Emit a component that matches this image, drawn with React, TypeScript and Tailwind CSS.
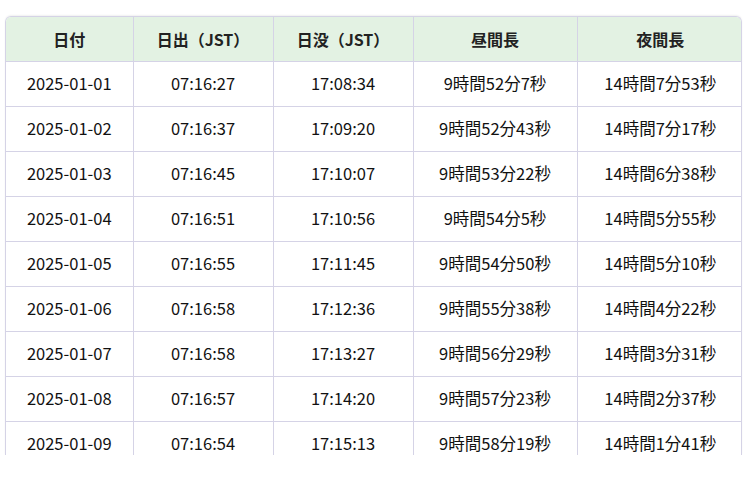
import React from "react";

const rows = [
  ["2025-01-01", "07:16:27", "17:08:34", "9時間52分7秒", "14時間7分53秒"],
  ["2025-01-02", "07:16:37", "17:09:20", "9時間52分43秒", "14時間7分17秒"],
  ["2025-01-03", "07:16:45", "17:10:07", "9時間53分22秒", "14時間6分38秒"],
  ["2025-01-04", "07:16:51", "17:10:56", "9時間54分5秒", "14時間5分55秒"],
  ["2025-01-05", "07:16:55", "17:11:45", "9時間54分50秒", "14時間5分10秒"],
  ["2025-01-06", "07:16:58", "17:12:36", "9時間55分38秒", "14時間4分22秒"],
  ["2025-01-07", "07:16:58", "17:13:27", "9時間56分29秒", "14時間3分31秒"],
  ["2025-01-08", "07:16:57", "17:14:20", "9時間57分23秒", "14時間2分37秒"],
  ["2025-01-09", "07:16:54", "17:15:13", "9時間58分19秒", "14時間1分41秒"],
];

const headers = ["日付", "日出（JST）", "日没（JST）", "昼間長", "夜間長"];
const widths = ["w-[127px]", "w-[140px]", "w-[140px]", "w-[164px]", "w-[166px]"];

export default function App() {
  return (
    <div
      className="bg-white w-[750px] h-[482px] pt-4 pl-[5px]"
      style={{ fontFamily: '"Noto Sans CJK JP", "Noto Sans", sans-serif' }}
    >
      <div className="w-[737px] h-[439px] overflow-hidden rounded-t-md border border-b-0 border-[#d5d3e6] shadow-[0_-1px_2px_rgba(0,0,0,0.06)]">
        <table className="w-full border-collapse table-fixed">
          <thead>
            <tr className="bg-[#e3f2e3] h-[44px]">
              {headers.map((h, i) => (
                <th
                  key={i}
                  className={`${widths[i]} border-b border-[#d5d3e6] ${i > 0 ? "border-l" : ""} text-[16px] font-bold text-[#222] text-center p-0`}
                >
                  {h}
                </th>
              ))}
            </tr>
          </thead>
          <tbody>
            {rows.map((r, ri) => (
              <tr key={ri} className="h-[45px]">
                {r.map((c, ci) => (
                  <td
                    key={ci}
                    className={`border-b border-[#d5d3e6] ${ci > 0 ? "border-l" : ""} text-[16.5px] text-[#111] text-center p-0`}
                  >
                    {c}
                  </td>
                ))}
              </tr>
            ))}
          </tbody>
        </table>
      </div>
    </div>
  );
}
